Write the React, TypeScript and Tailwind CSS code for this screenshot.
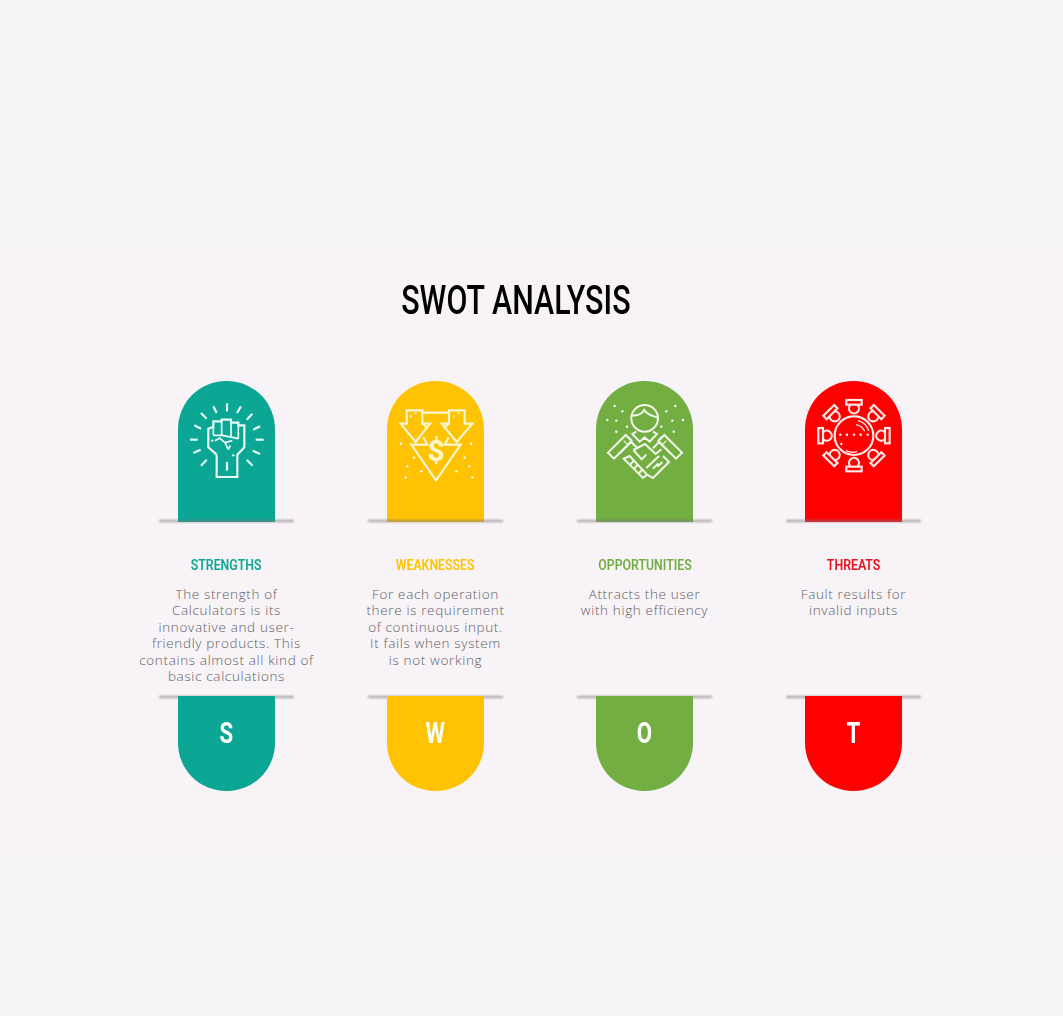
const sans = { fontFamily: '"Roboto","Liberation Sans",sans-serif' };

function Dots({ pts }: { pts: number[][] }) {
  return (
    <>
      {pts.map(([x, y], i) => (
        <circle key={i} cx={x} cy={y} r={3.5} fill="#fff" stroke="none" />
      ))}
    </>
  );
}

function Fist() {
  const rays = [
    [126, 16, 126, 40], [85, 25, 95, 45], [168, 25, 156, 45], [48, 45, 65, 62], [202, 47, 185, 65],
    [28, 82, 48, 92], [225, 85, 205, 95], [15, 125, 38, 125], [212, 125, 236, 125], [25, 165, 47, 155],
    [225, 168, 203, 158], [48, 203, 65, 185], [203, 203, 185, 185], [126, 192, 126, 218],
  ];
  return (
    <svg viewBox="0 0 252 252" className="h-[84px] w-[84px]" fill="none" stroke="#e8fbf6" strokeWidth={6.5}>
      {rays.map(([a, b, c, d], i) => <line key={i} x1={a} y1={b} x2={c} y2={d} />)}
      <path d="M95 170V237H157V170L178 148V82H160V74H138V65H110V70H85V86L70 92V148L95 170" />
      <path d="M85 86V112M110 70V112M138 65V115M160 74V122" strokeWidth={5} />
      <path d="M85 112H112L142 118L160 122M90 128L104 120L120 134L130 155M120 134L142 128M130 155L136 142" strokeWidth={5} />
      <Dots pts={[[82, 128], [145, 172]]} />
    </svg>
  );
}

function Arrows() {
  return (
    <svg viewBox="0 0 252 252" className="h-[84px] w-[84px]" fill="none" stroke="#fff6d0" strokeWidth={6.5}>
      <path d="M38 25H85V65H108L65 120L20 65H38Z" />
      <path d="M165 25H212V65H235L188 120L143 65H165Z" />
      <path d="M85 32H165M85 62L100 80M165 62L150 80" />
      <path d="M88 106L100 128H52L126 235L200 128H152L164 106" />
      <path d="M50 38V48M60 34H70M199 34H189M180 38V48" strokeWidth={3.5} />
      <text x="126" y="176" textAnchor="middle" fontSize="90" fontWeight="700" fill="#fff6d0" stroke="none" style={sans}>$</text>
      <Dots pts={[[21, 125], [231, 125], [60, 167], [212, 167], [40, 193], [226, 193], [82, 208], [188, 208], [35, 226], [235, 226]]} />
    </svg>
  );
}

function Shake() {
  return (
    <svg viewBox="0 0 252 252" className="h-[84px] w-[84px]" fill="none" stroke="#f1f8e9" strokeWidth={6}>
      <circle cx="125" cy="55" r="40" />
      <path d="M88 47C105 47 118 40 124 30C132 44 148 48 162 52" />
      <path d="M100 95L88 102L110 125L125 112L140 125L162 102L150 95M125 112V120" />
      <path d="M15 158L68 105L86 123L33 176Z" />
      <path d="M237 158L184 105L166 123L219 176Z" />
      <path d="M62 122L74 134M76 110L86 120M176 110L166 120M190 122L178 134" strokeWidth={3.5} />
      <path d="M50 160L84 126L104 145M202 160L168 126L150 145" />
      <path d="M91 150L126 132L158 162L175 148M91 150L116 178L130 164" />
      <path d="M62 176L80 168L132 224L120 234ZM80 196L94 180M92 208L106 192M106 222L120 206" />
      <path d="M132 224L150 234L198 186L180 168M130 204L168 168M150 206L166 190M164 200L178 186" />
      <Dots pts={[[35, 18], [58, 34], [13, 60], [40, 62], [72, 80], [40, 95], [217, 18], [190, 34], [240, 60], [208, 62], [175, 80], [212, 95]]} />
    </svg>
  );
}

function Virus() {
  const angles = [0, 45, 90, 135, 180, 225, 270, 315];
  return (
    <svg viewBox="0 0 252 252" className="h-[84px] w-[84px]" fill="none" stroke="#ffe8e8" strokeWidth={6.5}>
      <circle cx="126" cy="125" r="58" />
      {angles.map((a) => (
        <g key={a} transform={`rotate(${a} 126 125)`}>
          <rect x="103" y="18" width="46" height="14" />
          <path d="M115 33A15 15 0 1 0 137 33" />
        </g>
      ))}
      <path d="M138 80A46 46 0 0 1 170 110M132 92A36 36 0 0 1 158 112" strokeWidth={4} />
      <path d="M102 170A46 46 0 0 0 135 173" strokeWidth={4} />
      <Dots pts={[[85, 122], [105, 122], [126, 122], [146, 122], [167, 122], [88, 150]]} />
    </svg>
  );
}

function Line() {
  return <div className="absolute left-[-19px] h-[2px] w-[135px] rounded-full bg-[#7d777d]/70 blur-[1px]" />;
}

const items = [
  {
    title: "STRENGTHS", letter: "S", bg: "bg-[#0ba694]", text: "text-[#0ba694]", icon: <Fist />, pad: "pt-[17px]",
    lines: ["The strength of", "Calculators is its", "innovative and user-", "friendly products. This", "contains almost all kind of", "basic calculations"],
  },
  {
    title: "WEAKNESSES", letter: "W", bg: "bg-[#ffc303]", text: "text-[#ffc303]", icon: <Arrows />, pad: "pt-[21px]",
    lines: ["For each operation", "there is requirement", "of continuous input.", "It fails when system", "is not working"],
  },
  {
    title: "OPPORTUNITIES", letter: "O", bg: "bg-[#73ae43]", text: "text-[#73ae43]", icon: <Shake />, pad: "pt-[19px]",
    lines: ["Attracts the user", "with high efficiency"],
  },
  {
    title: "THREATS", letter: "T", bg: "bg-[#ff0000]", text: "text-[#e8101c]", icon: <Virus />, pad: "pt-[13px]",
    lines: ["Fault results for", "invalid inputs"],
  },
];

export default function App() {
  return (
    <div className="flex h-[1016px] w-full flex-col overflow-hidden bg-[#f5f5f5]">
      <div className="mt-[247px] h-[606px] bg-[#f7f3f7]">
        <h1
          className="mt-[29px] flex h-[50px] items-center justify-center pr-[31px] text-[40px] font-medium leading-none text-black"
          style={sans}
        >
          <span className="inline-block scale-x-[0.76] whitespace-nowrap">SWOT ANALYSIS</span>
        </h1>
        <div className="ml-[122px] mt-[55px] grid w-[836px] grid-cols-4">
          {items.map((it) => (
            <div key={it.title} className="flex flex-col items-center">
              <div className="relative w-[97px]">
                <div className={`flex h-[141px] justify-center rounded-t-[48px] ${it.bg} ${it.pad}`}>{it.icon}</div>
                <div className="absolute bottom-[2px] left-0 w-full"><Line /></div>
              </div>
              <div className="flex h-[174px] w-[200px] flex-col items-center pt-[34px]">
                <div className={`flex h-[18px] items-center whitespace-nowrap text-[15px] font-semibold leading-none ${it.text}`} style={sans}>
                  <span className="inline-block scale-x-[0.82]">{it.title}</span>
                </div>
                <p
                  className="mt-[12px] whitespace-nowrap text-center text-[13.5px] font-light leading-[16.4px] tracking-[0.65px] text-[#5f5d63]"
                  style={{ fontFamily: '"Open Sans","Noto Sans",sans-serif' }}
                >
                  {it.lines.map((l) => <span key={l} className="block">{l}</span>)}
                </p>
              </div>
              <div className="relative w-[97px]">
                <div className="absolute left-0 top-0 w-full"><Line /></div>
                <div className={`relative flex h-[95px] justify-center rounded-b-[48px] pt-[22px] text-[30px] font-bold leading-[30px] text-white ${it.bg}`} style={sans}>
                  <span className="inline-block scale-x-[0.74]">{it.letter}</span>
                </div>
              </div>
            </div>
          ))}
        </div>
      </div>
    </div>
  );
}
